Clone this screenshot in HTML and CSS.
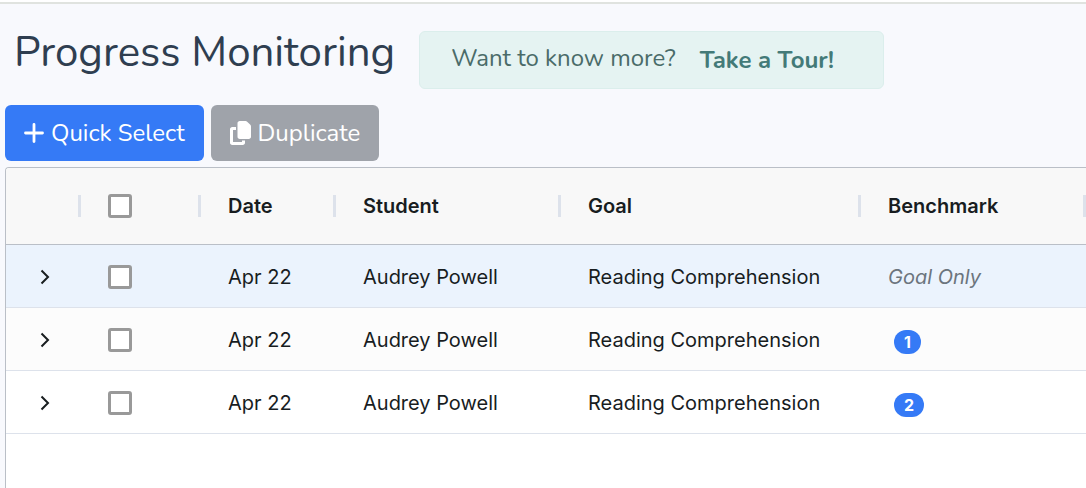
FILE: index.html
```html
<!DOCTYPE html>
<html lang="en">
<head>
<meta charset="utf-8">
<meta name="viewport" content="width=device-width, initial-scale=1">
<title>Progress Monitoring</title>
<link rel="stylesheet" href="styles.css">
</head>
<body>
<main class="page">
  <header class="page-header">
    <h1 class="title">Progress Monitoring</h1>
    <div class="tour">
      <span class="tour-text">Want to know more?</span>
      <a class="tour-link" href="#tour">Take a Tour!</a>
    </div>
  </header>
  <div class="toolbar">
    <button class="btn btn-primary" type="button">
      <svg class="icon-plus" viewBox="0 0 20 20" aria-hidden="true"><path d="M10 1.500v17M1.500 10h17" fill="none" stroke="currentColor" stroke-width="2.800" stroke-linecap="round"/></svg>
      Quick Select
    </button>
    <button class="btn btn-muted" type="button">
      <svg class="icon-copy" viewBox="0 0 448 512" aria-hidden="true"><path fill="currentColor" d="M208 0H332.100c12.700 0 24.900 5.100 33.900 14.100l67.900 67.900c9 9 14.100 21.200 14.100 33.900V336c0 26.500-21.500 48-48 48H208c-26.500 0-48-21.500-48-48V48c0-26.500 21.500-48 48-48zM48 128h80v64H64V448H256V416h64v48c0 26.500-21.500 48-48 48H48c-26.500 0-48-21.500-48-48V176c0-26.500 21.500-48 48-48z"/></svg>
      Duplicate
    </button>
  </div>
  <div class="grid">
    <table class="table">
      <colgroup>
        <col class="col-expand"><col class="col-check"><col class="col-date"><col class="col-student"><col class="col-goal"><col class="col-benchmark">
      </colgroup>
      <thead>
        <tr>
          <th aria-label="Expand"></th>
          <th><input class="check" type="checkbox" aria-label="Select all rows"></th>
          <th scope="col">Date</th>
          <th scope="col">Student</th>
          <th scope="col">Goal</th>
          <th scope="col">Benchmark</th>
        </tr>
      </thead>
      <tbody>
        <tr class="active">
          <td><button class="expand" type="button" aria-label="Expand row"><svg class="chevron" viewBox="0 0 10 16" aria-hidden="true"><path d="M1.500 1.500 8 8l-6.500 6.500" fill="none" stroke="currentColor" stroke-width="2"/></svg></button></td>
          <td><input class="check" type="checkbox" aria-label="Select row 1"></td>
          <td>Apr 22</td>
          <td>Audrey Powell</td>
          <td>Reading Comprehension</td>
          <td><em class="goal-only">Goal Only</em></td>
        </tr>
        <tr class="striped">
          <td><button class="expand" type="button" aria-label="Expand row"><svg class="chevron" viewBox="0 0 10 16" aria-hidden="true"><path d="M1.500 1.500 8 8l-6.500 6.500" fill="none" stroke="currentColor" stroke-width="2"/></svg></button></td>
          <td><input class="check" type="checkbox" aria-label="Select row 2"></td>
          <td>Apr 22</td>
          <td>Audrey Powell</td>
          <td>Reading Comprehension</td>
          <td><span class="badge">1</span></td>
        </tr>
        <tr>
          <td><button class="expand" type="button" aria-label="Expand row"><svg class="chevron" viewBox="0 0 10 16" aria-hidden="true"><path d="M1.500 1.500 8 8l-6.500 6.500" fill="none" stroke="currentColor" stroke-width="2"/></svg></button></td>
          <td><input class="check" type="checkbox" aria-label="Select row 3"></td>
          <td>Apr 22</td>
          <td>Audrey Powell</td>
          <td>Reading Comprehension</td>
          <td><span class="badge">2</span></td>
        </tr>
      </tbody>
    </table>
  </div>
</main>
</body>
</html>
```
FILE: styles.css
```css
* {
  box-sizing: border-box;
}

body {
  margin: 0;
  background: #f8f9fd;
  color: #181d1f;
  font-family: Inter, "Liberation Sans", sans-serif;
}

.page {
  display: flex;
  flex-direction: column;
  min-height: 100vh;
  border-top: 2px solid #fff;
}

.page-header {
  display: flex;
  align-items: flex-start;
  gap: 24px;
  padding: 27px 14px 16px;
  border-top: 2px solid #e0e3df;
  font-family: Nunito, "Open Sans", sans-serif;
}

.title {
  margin: 0;
  color: #2f3e50;
  font-size: 42px;
  font-weight: 400;
  line-height: 44px;
  white-space: nowrap;
}

.tour {
  display: flex;
  align-items: center;
  gap: 24px;
  height: 58px;
  padding: 0 49px 0 31px;
  border: 1px solid #dbeeec;
  border-radius: 6px;
  background: #e5f3f2;
  font-size: 24px;
  line-height: 32px;
  white-space: nowrap;
}

.tour-text {
  padding-bottom: 4px;
  color: #4a6b69;
  font-weight: 400;
}

.tour-link {
  color: #437a78;
  font-weight: 700;
  text-decoration: none;
}

.toolbar {
  display: flex;
  gap: 7px;
  padding: 0 5px 6px;
}

.btn {
  display: flex;
  align-items: center;
  gap: 7px;
  height: 56px;
  padding: 0 19px;
  border: 0;
  border-radius: 6px;
  color: #fff;
  font-family: Nunito, "Open Sans", sans-serif;
  font-size: 24px;
  font-weight: 400;
  line-height: 32px;
  white-space: nowrap;
}

.btn-primary {
  background: #357af6;
}

.btn-muted {
  background: #9fa3aa;
}

.icon-plus {
  width: 20px;
  height: 20px;
}

.icon-copy {
  width: 21px;
  height: 24px;
}

.grid {
  flex: 1;
  margin-left: 5px;
  overflow: hidden;
  border-top: 1px solid #babfc7;
  border-left: 1px solid #babfc7;
  border-top-left-radius: 4px;
  background: #fff;
}

.table {
  width: 100%;
  min-width: 1080px;
  border-collapse: separate;
  border-spacing: 0;
  table-layout: fixed;
  font-size: 20px;
  line-height: 28px;
}

.col-expand {
  width: 75px;
}

.col-check {
  width: 120px;
}

.col-date {
  width: 135px;
}

.col-student,
.col-benchmark {
  width: 225px;
}

.col-goal {
  width: 300px;
}

.table th,
.table td {
  padding: 0 27px;
  text-align: left;
  vertical-align: middle;
  white-space: nowrap;
}

.table th {
  height: 77px;
  border-bottom: 1px solid #babfc7;
  background: linear-gradient(#dde2eb, #dde2eb) right center / 3px 22px no-repeat #f8f8f8;
  font-weight: 600;
}

.table td {
  height: 63px;
  padding-top: 2px;
  border-bottom: 1px solid #dde2eb;
}

.active {
  background: #ebf3fd;
}

.striped {
  background: #fcfcfc;
}

.check {
  display: block;
  width: 24px;
  height: 24px;
  margin: 0;
  border: 3px solid #999;
  border-radius: 3px;
  background: #fff;
  appearance: none;
}

.expand {
  display: flex;
  align-items: center;
  justify-content: center;
  width: 24px;
  height: 24px;
  padding: 0;
  border: 0;
  background: none;
  color: #181d1f;
}

.chevron {
  width: 10px;
  height: 16px;
}

.goal-only {
  color: #6c757d;
}

.badge {
  display: inline-block;
  margin: 2px 0 0 6px;
  padding: 0 10px;
  border-radius: 12px;
  background: #357af6;
  color: #fff;
  font-size: 16px;
  font-weight: 700;
  line-height: 24px;
  vertical-align: middle;
}
```
